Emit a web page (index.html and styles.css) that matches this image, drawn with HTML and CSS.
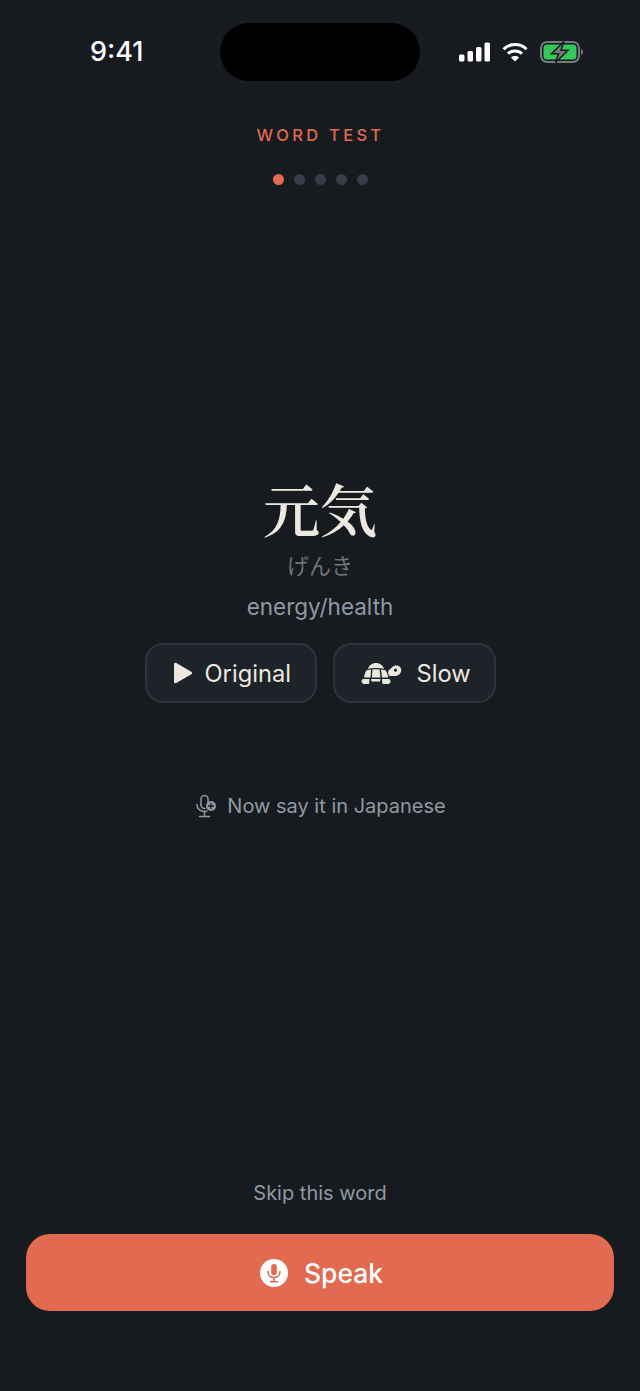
FILE: index.html
```html
<!DOCTYPE html>
<html lang="en">
<head>
  <meta charset="UTF-8" />
  <title>Word Test</title>
  <link rel="stylesheet" href="styles.css">
</head>
<body>
  <div class="screen">
    <div class="status-bar">
      <span class="time">9:41</span>
      <div class="island"></div>
      <div class="status-icons">
        <svg width="32" height="20" viewBox="0 0 32 20" fill="#fff">
          <rect x="0" y="12.5" width="5.5" height="7" rx="1.5"/>
          <rect x="8.5" y="9" width="5.5" height="10.5" rx="1.5"/>
          <rect x="17" y="5" width="5.5" height="14.5" rx="1.5"/>
          <rect x="25.5" y="0.5" width="5.5" height="19" rx="1.5"/>
        </svg>
        <svg width="26" height="20" viewBox="0 0 26 20" fill="none" stroke="#fff" stroke-width="3">
          <path d="M1.5 7.2C7.8 1 18.2 1 24.5 7.2"/>
          <path d="M6 11.6C9.8 8 16.2 8 20 11.6"/>
          <path d="M13 19.5L9 15.4C11.2 13.6 14.8 13.6 17 15.4Z" fill="#fff" stroke="none"/>
        </svg>
        <svg class="battery" width="43" height="22" viewBox="0 0 43 22">
          <rect x="1" y="1" width="38" height="20" rx="6" fill="none" stroke="#77797c" stroke-width="2"/>
          <rect x="3.5" y="3.5" width="33" height="15" rx="3.5" fill="#34c759"/>
          <path d="M41 8v6c1.200-.4 2-1.700 2-3s-.8-2.600-2-3z" fill="#77797c"/>
          <path d="M24 0.500L11.500 12.800h7L15.500 21.500 28 9.200h-7z" fill="#77797c" stroke="#171a1f" stroke-width="1.500"/>
        </svg>
      </div>
    </div>

    <div class="progress">
      <div class="eyebrow">WORD TEST</div>
      <div class="dots">
        <span class="dot dot-active"></span>
        <span class="dot"></span>
        <span class="dot"></span>
        <span class="dot"></span>
        <span class="dot"></span>
      </div>
    </div>

    <div class="word">
      <div class="kanji" lang="ja">元気</div>
      <div class="kana" lang="ja">げんき</div>
      <div class="meaning">energy/health</div>
      <div class="audio-row">
        <button class="audio-btn btn-original">
          <svg width="20" height="22" viewBox="0 0 20 22" fill="#ece8df">
            <path d="M1 2.300C1 1 2.200 .4 3.300 1L18.300 9.700C19.300 10.300 19.300 11.700 18.300 12.300L3.300 21C2.200 21.600 1 21 1 19.700Z"/>
          </svg>
          Original
        </button>
        <button class="audio-btn btn-slow">
          <svg width="41" height="24" viewBox="0 0 41 24" fill="#ece8df">
            <!-- shell top -->
            <path d="M7 8C8 4.500 11 2 15 2S22 4.500 23 8C18.500 6.800 11.500 6.800 7 8Z"/>
            <!-- shell plates -->
            <path d="M5.500 9.300L10 8.500 9.500 16.500H3C3.300 14 4.200 11.500 5.500 9.300Z"/>
            <path d="M11.500 8.200H18.500L19.500 16.500H10.800Z"/>
            <path d="M20 8.500L24.500 9.300C26 11.500 27 14 27.300 16.500H21Z"/>
            <!-- feet and belly -->
            <path d="M0.500 20C0.500 18.800 1.400 18 2.500 18H8.500L8 23H3C1.500 23 0.500 21.500 0.500 20Z"/>
            <path d="M10 18H19.500L19 20.500H10.500Z"/>
            <path d="M21 18H27.500C28.800 18 29.500 19 29.500 20.300S28.600 23 27 23H21.500Z"/>
            <!-- head -->
            <path fill-rule="evenodd" d="M27 11C27.500 8.500 30 7.500 31 6.500 32.500 4.800 35 4.200 37 4.800 39.500 5.500 40.500 7.800 40.200 10 39.800 13 36.500 15 33.500 15H29.200C28 15 27.200 13 27 11ZM34.500 7.500A1.600 1.600 0 1 0 34.500 10.700 1.600 1.600 0 1 0 34.500 7.500Z"/>
          </svg>
          Slow
        </button>
      </div>
      <div class="prompt">
        <svg width="22" height="24" viewBox="0 0 22 24" fill="none" stroke="#8f99a3" stroke-width="1.500" stroke-linecap="round">
          <path d="M6 11V5a3.500 3.500 0 0 1 7 0v4"/>
          <path d="M6 11a3.500 3.500 0 0 0 4 3.400"/>
          <path d="M2 10.500c0 4 3 7 7.500 7 1 0 1.800-.1 2.500-.4"/>
          <path d="M9.500 17.500V22M4.500 22.500h10"/>
          <circle cx="16" cy="12" r="5" fill="#8f99a3" stroke="none"/>
          <path d="M16 9.500v5M13.500 12h5" stroke="#171a1f" stroke-width="1.300"/>
        </svg>
        <span>Now say it in Japanese</span>
      </div>
    </div>

    <div class="actions">
      <div class="skip">Skip this word</div>
      <button class="speak-btn">
        <span class="speak-icon">
          <svg width="16" height="20" viewBox="0 0 16 20" fill="none" stroke="#e16a50" stroke-width="1.600" stroke-linecap="round">
            <rect x="5.200" y="1" width="5.600" height="11" rx="2.800" fill="#e16a50" stroke="none"/>
            <path d="M2 8.500c0 3.500 2.500 6 6 6s6-2.500 6-6"/>
            <path d="M8 14.500V18.500M4.500 18.800h7"/>
          </svg>
        </span>
        Speak
      </button>
    </div>
  </div>
</body>
</html>
```

FILE: styles.css
```css
* {
  box-sizing: border-box;
}
body {
  margin: 0;
  background-color: #171a1f;
  font-family: Inter, "Noto Sans CJK JP", sans-serif;
}
.screen {
  width: 640px;
  height: 1391px;
  display: flex;
  flex-direction: column;
  overflow: hidden;
}

/* status bar */
.status-bar {
  height: 58px;
  margin-top: 23px;
  display: flex;
  align-items: center;
  justify-content: center;
  position: relative;
}
.time {
  position: absolute;
  left: 90px;
  top: 12px;
  font-size: 27px;
  line-height: 34px;
  font-weight: 500;
  color: #fff;
}
.island {
  width: 200px;
  height: 58px;
  border-radius: 29px;
  background-color: #000;
}
.status-icons {
  position: absolute;
  left: 459px;
  top: 18px;
  display: flex;
  align-items: center;
  gap: 11px;
}
.battery {
  margin-left: 1px;
}

/* progress */
.progress {
  margin-top: 44px;
  display: flex;
  flex-direction: column;
  align-items: center;
}
.eyebrow {
  font-size: 16.500px;
  line-height: 20px;
  font-weight: 500;
  letter-spacing: 3.300px;
  margin-right: -1px;
  color: #e16a50;
}
.dots {
  margin-top: 29px;
  display: flex;
  gap: 10px;
}
.dot {
  width: 11px;
  height: 11px;
  border-radius: 50%;
  background-color: #353d49;
}
.dot-active {
  background-color: #e16a50;
}

/* word */
.word {
  margin-top: 288px;
  display: flex;
  flex-direction: column;
  align-items: center;
}
.kanji {
  font-family: "Noto Serif CJK JP", "Noto Sans CJK JP", serif;
  font-size: 57px;
  line-height: 68px;
  font-weight: 600;
  color: #ece8df;
}
.kana {
  margin-top: 8px;
  font-family: "Noto Sans CJK JP", sans-serif;
  font-size: 22px;
  line-height: 30px;
  color: #707479;
}
.meaning {
  margin-top: 13px;
  font-size: 22.500px;
  line-height: 30px;
  color: #8f99a3;
}
.audio-row {
  margin-top: 21px;
  display: flex;
  gap: 16px;
}
.audio-btn {
  height: 60px;
  display: flex;
  align-items: center;
  border: 2px solid #2d343e;
  border-radius: 18px;
  background-color: #1e2229;
  color: #ece8df;
  font-family: inherit;
  font-size: 23.700px;
  font-weight: 400;
}
.btn-original {
  width: 172px;
  padding-left: 26px;
  gap: 12px;
}
.btn-slow {
  width: 163px;
  padding-left: 26px;
  gap: 15px;
}
.prompt {
  margin-top: 89px;
  margin-left: 1px;
  display: flex;
  align-items: center;
  gap: 10px;
  font-size: 20px;
  line-height: 28px;
  color: #8f99a3;
}

/* bottom */
.actions {
  margin-top: auto;
  margin-bottom: 80px;
  padding: 0 26px;
  display: flex;
  flex-direction: column;
  align-items: center;
}
.skip {
  font-size: 20px;
  line-height: 28px;
  color: #8f99a3;
}
.speak-btn {
  margin-top: 27px;
  width: 100%;
  height: 77px;
  padding: 0 0 0 3px;
  display: flex;
  align-items: center;
  justify-content: center;
  gap: 16px;
  border: none;
  border-radius: 24px;
  background-color: #e16a50;
  color: #fff;
  font-family: inherit;
  font-size: 26.500px;
  font-weight: 500;
}
.speak-icon {
  width: 28px;
  height: 28px;
  border-radius: 50%;
  background-color: #fff;
  display: flex;
  align-items: center;
  justify-content: center;
}
```
